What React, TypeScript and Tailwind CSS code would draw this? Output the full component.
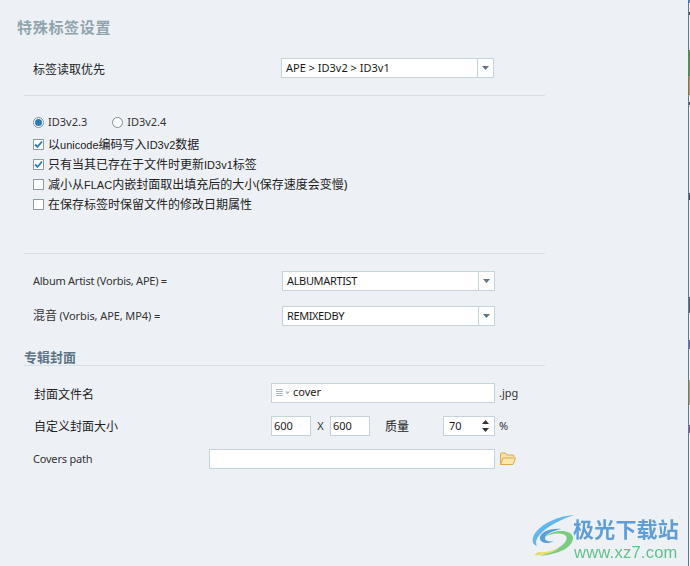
import React from 'react';

const cjk = "font-['Noto_Sans','Noto_Sans_CJK_SC',sans-serif]";

// junk pixels from the neighbouring window along the right edge
const edgeSpecks = [
  { h: 3, c: '#3b82d6' },
  { h: 9, c: '#eef1f6' },
  { h: 3, c: '#444c55' },
  { h: 35, c: '#eef1f6' },
  { h: 26, c: '#4f9a2e' },
  { h: 19, c: '#c49a3e' },
  { h: 7, c: '#eef1f6' },
  { h: 3, c: '#444c55' },
  { h: 88, c: '#eef1f6' },
  { h: 7, c: '#444c55' },
  { h: 97, c: '#eef1f6' },
  { h: 16, c: '#555d66' },
  { h: 27, c: '#eef1f6' },
  { h: 9, c: '#6b6fb0' },
  { h: 31, c: '#eef1f6' },
  { h: 25, c: '#a8a070' },
  { h: 20, c: '#eef1f6' },
  { h: 8, c: '#7a5f8f' },
];

const Hr = ({ className = '' }: { className?: string }) => (
  <div className={`ml-[24px] w-[521px] h-px bg-[#d5dfe5] ${className}`} />
);

const Combo = ({ value, className = '' }: { value: string; className?: string }) => (
  <div className={`w-[213px] h-[20px] flex bg-white border border-[#c5d3da] ${className}`}>
    <div className="flex-1 pl-[4px] text-[11px] leading-[18px] text-[#1a1a1a]">{value}</div>
    <div className="w-[16px] border-l border-[#c5d3da] flex items-center justify-center">
      <svg width="7" height="4" viewBox="0 0 7 4"><path d="M0 0h7L3.5 4z" fill="#5f7484" /></svg>
    </div>
  </div>
);

// latin runs inside the chinese labels are set tighter than the CJK glyphs
const L = ({ children }: { children: React.ReactNode }) => (
  <span className="font-['Liberation_Sans',sans-serif] text-[11px]">{children}</span>
);

const Check = ({ on, children }: { on?: boolean; children: React.ReactNode }) => (
  <div className="h-[20px] flex items-center pl-[33px]">
    <div className="w-[11px] h-[11px] border border-[#8f9ba3] bg-white flex items-center justify-center">
      {on && (
        <svg width="9" height="9" viewBox="0 0 9 9">
          <path d="M1 4.5 3.5 7 8 1.5" fill="none" stroke="#2a7db0" strokeWidth="1.8" />
        </svg>
      )}
    </div>
    <span className="ml-[4px] pt-[1px] text-[12px] text-[#222]">{children}</span>
  </div>
);

const Radio = ({ on, label }: { on?: boolean; label: string }) => (
  <div className="flex items-center">
    <div className="w-[11px] h-[11px] rounded-full border border-[#7f8c95] bg-white flex items-center justify-center">
      {on && <div className="w-[7px] h-[7px] rounded-full bg-[#2a7db0]" />}
    </div>
    <span className="ml-[4px] text-[11px] text-[#333]">{label}</span>
  </div>
);

const Field = ({ className = '', children }: { className?: string; children?: React.ReactNode }) => (
  <div className={`h-[20px] bg-white border border-[#c5d3da] flex items-center text-[11px] text-[#1a1a1a] ${className}`}>
    {children}
  </div>
);

const FolderIcon = () => (
  <svg width="16" height="14" viewBox="0 0 16 14">
    <path d="M.5 12.5V2a1 1 0 0 1 1-1h4l1.5 2h6a1 1 0 0 1 1 1v1" fill="#f7e2a8" stroke="#dba94a" />
    <path d="M.5 12.5 3 6h12.5l-2.5 6.5z" fill="#fbe7ae" stroke="#dba94a" />
  </svg>
);

const Watermark = () => (
  <div className="absolute left-[531px] top-[515px] flex blur-[0.4px]">
    <svg width="46" height="43" viewBox="0 0 46 43">
      <path d="M43 0C28 1 10 8 3 20c-3 6-1 10 3 11C2 24 12 11 43 0z" fill="#62b6e8" />
      <path d="M30 14C18 13 8 18 9 24c1 5 9 5 14 2-5 1-9 0-9-3 0-4 8-7 16-9z" fill="#5b9fd8" />
      <path d="M14 22c6-4 18-5 21-1 3 5-5 13-26 20 20-2 33-9 33-18 0-8-18-10-28-1z" fill="#7ccb82" />
      <path d="M3 40c8 1 18-2 26-7-8 3-17 5-22 4z" fill="#e6dc6a" />
    </svg>
    <div className="ml-[-4px] flex flex-col items-start">
      <span className="font-['Noto_Sans_CJK_SC',sans-serif] text-[21px] leading-[24px] mt-[1px] font-bold tracking-[0.2px] text-[#5e9dd6]">极光下载站</span>
      <span className="font-['Liberation_Sans',sans-serif] ml-[1px] text-[16.5px] tracking-[0.25px] leading-[16px] mt-[4px] font-medium text-[#62c08a]">www.xz7.com</span>
    </div>
  </div>
);

export default function App() {
  return (
    <div className={`relative w-[690px] h-[566px] overflow-hidden bg-[#edf1f6] flex ${cjk}`}>
      <div className="flex-1 flex flex-col pt-[17px]">
        <div className="h-[20px] pl-[17px] text-[15px] leading-[20px] tracking-[0.7px] font-bold text-[#90a4ae]">特殊标签设置</div>

        <div className="mt-[21px] h-[20px] flex items-center pl-[33px]">
          <span className="w-[248px] pt-[3px] text-[12px] text-[#222]">标签读取优先</span>
          <Combo value="APE > ID3v2 > ID3v1" />
        </div>
        <Hr className="mt-[17px]" />

        <div className="mt-[16px] h-[20px] flex items-center pl-[33px] gap-[25px]">
          <Radio on label="ID3v2.3" />
          <Radio label="ID3v2.4" />
        </div>
        <div className="mt-[2px] flex flex-col">
          <Check on>以<L>unicode</L>编码写入<L>ID3v2</L>数据</Check>
          <Check on>只有当其已存在于文件时更新<L>ID3v1</L>标签</Check>
          <Check>减小从<L>FLAC</L>内嵌封面取出填充后的大小(保存速度会变慢)</Check>
          <Check>在保存标签时保留文件的修改日期属性</Check>
        </div>
        <Hr className="mt-[39px]" />

        <div className="mt-[17px] h-[20px] flex items-center pl-[33px]">
          <span className="w-[249px] text-[11px] tracking-[-0.25px] text-[#333]">Album Artist (Vorbis, APE) =</span>
          <Combo value="ALBUMARTIST" className="tracking-[-0.35px]" />
        </div>
        <div className="mt-[15px] h-[20px] flex items-center pl-[33px]">
          <span className="w-[249px] text-[11px] tracking-[-0.1px] text-[#333]">
            <span className="text-[12px]">混音</span> (Vorbis, APE, MP4) =
          </span>
          <Combo value="REMIXEDBY" className="tracking-[-0.4px]" />
        </div>

        <div className="mt-[21px] ml-[24px] w-[521px] h-[19px] border-b border-[#d5dfe5] text-[13px] leading-[20px] font-bold text-[#5f7484]">专辑封面</div>

        <div className="mt-[17px] h-[20px] flex items-center pl-[34px]">
          <span className="w-[237px] pt-[3px] text-[12px] text-[#222]">封面文件名</span>
          <Field className="w-[224px]">
            <svg width="14" height="8" viewBox="0 0 14 8" className="ml-[4px]">
              <path d="M0 .5h7M0 2.5h7M0 4.5h7M0 6.5h7" stroke="#aab6bd" />
              <path d="M9 2.5h5l-2.5 3z" fill="#b5c0c6" />
            </svg>
            <span className="ml-[3px] pb-[1px]">cover</span>
          </Field>
          <span className="ml-[4px] text-[11px] text-[#333]">.jpg</span>
        </div>

        <div className="mt-[13px] h-[20px] flex items-center pl-[34px]">
          <span className="w-[237px] pt-[2px] text-[12px] text-[#222]">自定义封面大小</span>
          <Field className="w-[40px] pl-[2px]">600</Field>
          <span className="w-[19px] text-center text-[11px] text-[#333]">X</span>
          <Field className="w-[40px] pl-[2px]">600</Field>
          <span className="ml-[15px] w-[58px] pt-[2px] text-[12px] text-[#222]">质量</span>
          <Field className="w-[52px] pl-[5px] justify-between">
            70
            <svg width="7" height="12" viewBox="0 0 7 12" className="mr-[5px]">
              <path d="M3.5 0 7 4H0zM3.5 12 0 8h7z" fill="#333" />
            </svg>
          </Field>
          <span className="ml-[4px] text-[11px] text-[#333]">%</span>
        </div>

        <div className="mt-[13px] h-[20px] flex items-center pl-[33px]">
          <span className="w-[176px] text-[11px] tracking-[-0.2px] text-[#333]">Covers path</span>
          <Field className="w-[286px]" />
          <div className="ml-[5px]"><FolderIcon /></div>
        </div>
      </div>

      <div className="w-px bg-[#5f7a8c]" />
      <div className="w-px flex flex-col">
        {edgeSpecks.map((s, i) => (
          <div key={i} style={{ height: s.h, background: s.c }} />
        ))}
      </div>

      <Watermark />
    </div>
  );
}
